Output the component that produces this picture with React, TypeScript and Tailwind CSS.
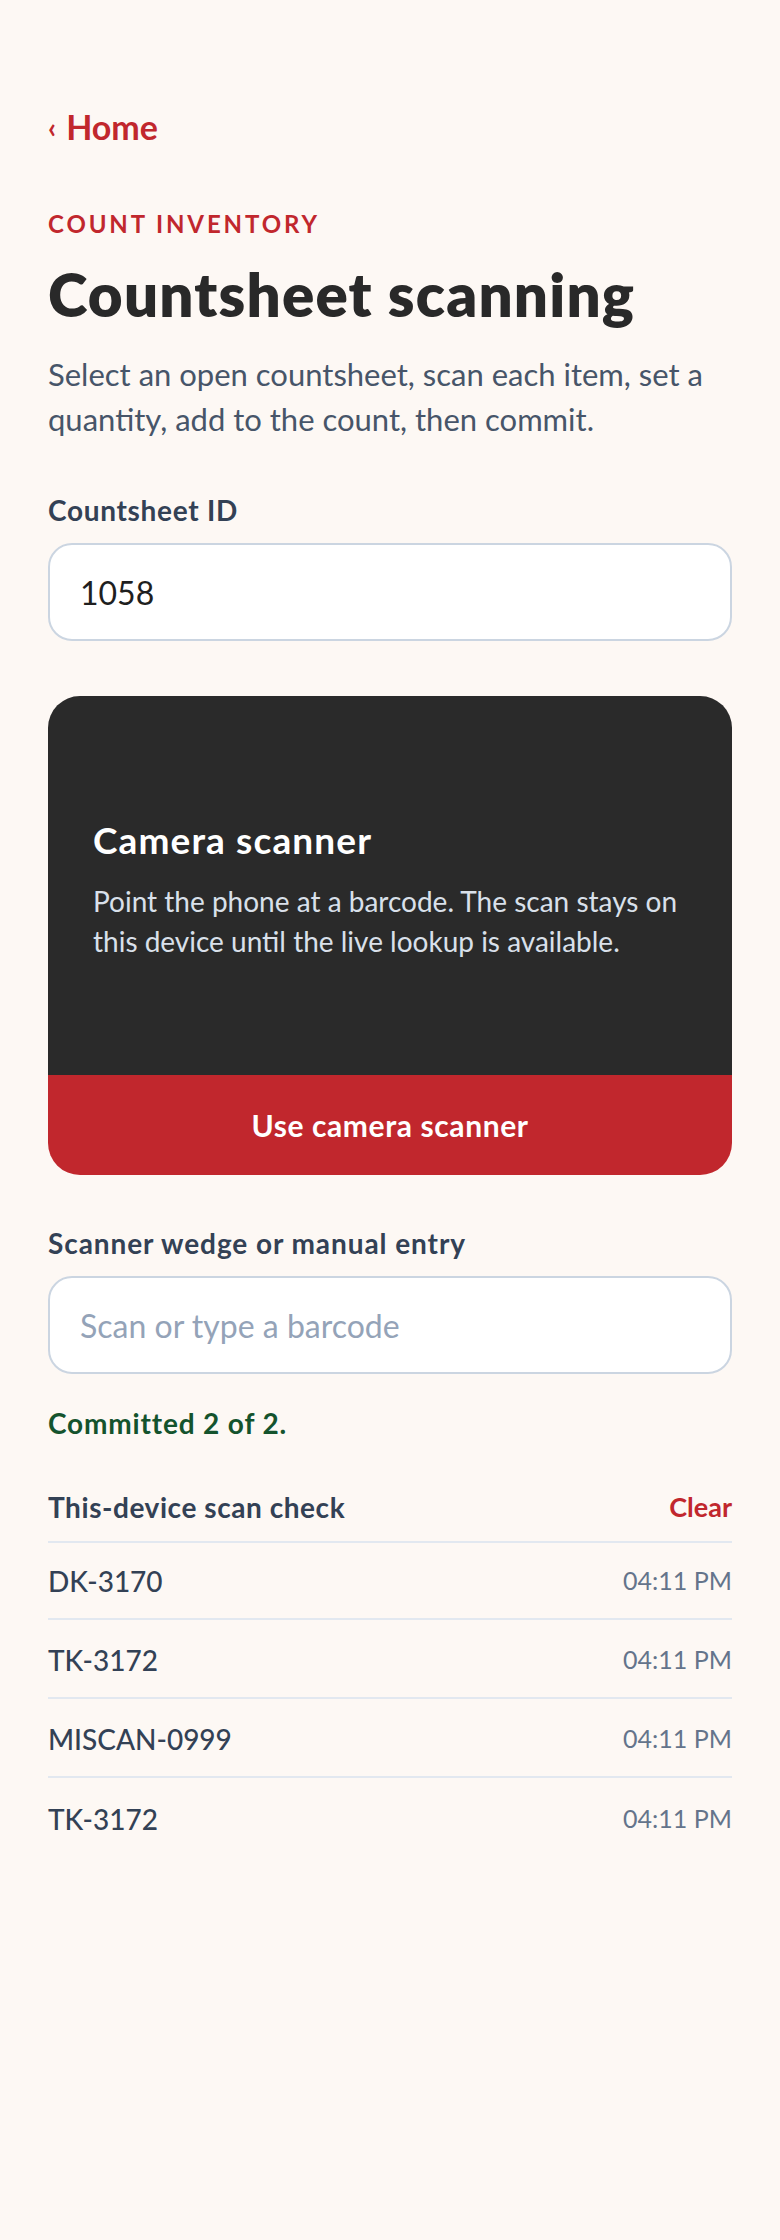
import React from 'react'

const scans = [
  { code: 'DK-3170', time: '04:11 PM' },
  { code: 'TK-3172', time: '04:11 PM' },
  { code: 'MISCAN-0999', time: '04:11 PM' },
  { code: 'TK-3172', time: '04:11 PM' },
]

export default function App() {
  return (
    <div
      className="min-h-screen bg-[#fdf8f4] px-12 pt-[103px] pb-24"
      style={{ fontFamily: 'Lato, "Noto Sans", sans-serif' }}
    >
      {/* Back link */}
      <a href="#" className="inline-flex items-center gap-[10px] text-[34px] leading-[48px] font-bold text-[#c1272d]">
        <span className="text-[28px]">‹</span>
        Home
      </a>

      {/* Header */}
      <p className="mt-[57px] text-[24px] leading-8 font-bold tracking-[0.12em] text-[#c1272d] uppercase">
        Count inventory
      </p>
      <h1 className="mt-[18px] text-[60px] leading-[72px] font-extrabold tracking-[1.2px] text-[#292929]">
        Countsheet scanning
      </h1>
      <p className="mt-[22px] text-[31px] leading-[45px] text-[#475569]">
        Select an open countsheet, scan each item, set a quantity, add to the count, then commit.
      </p>

      {/* Countsheet */}
      <label className="mt-[48px] block text-[28px] leading-10 font-bold tracking-[0.025em] text-[#334155]">
        Countsheet ID
      </label>
      <input
        defaultValue="1058"
        className="mt-[13px] block w-full h-[98px] px-[30px] rounded-3xl border-2 border-[#cbd5e1] bg-white text-[32px] text-[#1f1f1f] outline-none"
      />

      {/* Camera card */}
      <div className="mt-[55px] rounded-[32px] overflow-hidden">
        <div className="bg-[#2a2a2a] px-[45px] pt-[120px] pb-[114px]">
          <h2 className="text-[37px] leading-[48px] font-bold tracking-[0.03em] text-white">Camera scanner</h2>
          <p className="mt-[17px] text-[28px] leading-10 text-[#d9e0ea]">
            Point the phone at a barcode. The scan stays on this device until the live lookup is available.
          </p>
        </div>
        <button className="block w-full h-[100px] bg-[#c1272d] text-[30px] font-bold tracking-[0.02em] text-white">
          Use camera scanner
        </button>
      </div>

      {/* Manual entry */}
      <label className="mt-[48px] block text-[28px] leading-10 font-bold tracking-[0.033em] text-[#334155]">
        Scanner wedge or manual entry
      </label>
      <input
        placeholder="Scan or type a barcode"
        className="mt-[13px] block w-full h-[98px] px-[30px] rounded-3xl border-2 border-[#cbd5e1] bg-white text-[32px] text-[#1f1f1f] placeholder:text-[#94a3b8] outline-none"
      />

      <p className="mt-[29px] text-[28px] leading-10 font-bold tracking-[0.03em] text-[#14532d]">Committed 2 of 2.</p>

      {/* Scan check list */}
      <div className="mt-[44px]">
        <div className="flex items-center justify-between pb-[14px] border-b-2 border-[#e2e8f0]">
          <span className="text-[28px] leading-10 font-bold tracking-[0.02em] text-[#334155]">This-device scan check</span>
          <button className="text-[27px] leading-10 font-bold text-[#c1272d]">Clear</button>
        </div>
        <ul className="divide-y-2 divide-[#e2e8f0]">
          {scans.map((s, i) => (
            <li key={i} className="flex items-center justify-between h-[79px] pt-[2px] first:h-[77px] first:pt-0">
              <span className="text-[28px] font-medium text-[#334155]">{s.code}</span>
              <span className="text-[25px] text-[#64748b]">{s.time}</span>
            </li>
          ))}
        </ul>
      </div>
    </div>
  )
}
